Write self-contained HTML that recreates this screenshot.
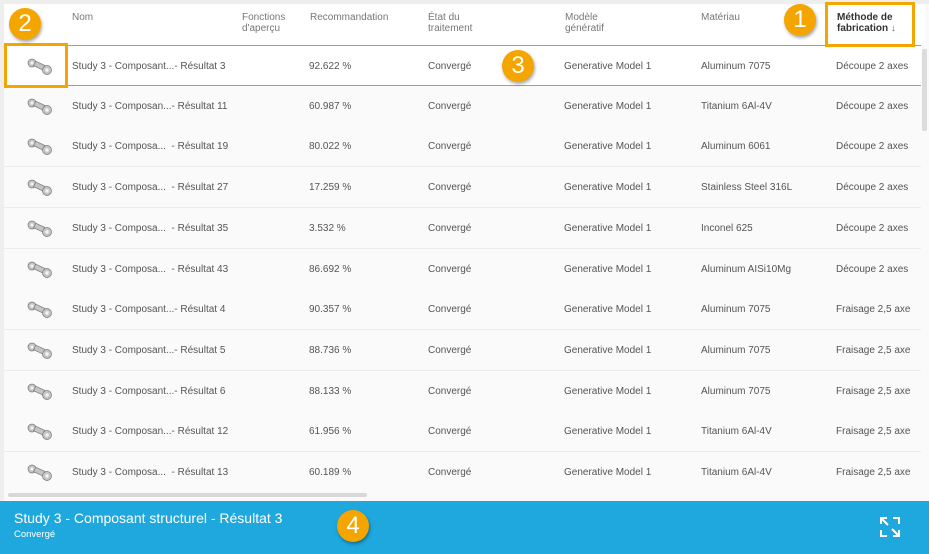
<!DOCTYPE html>
<html><head><meta charset="utf-8"><style>
*{margin:0;padding:0;box-sizing:border-box}
body{width:929px;height:554px;overflow:hidden;background:#eeeeee;font-family:"Liberation Sans",sans-serif;position:relative}
.panel{position:absolute;left:4px;top:4px;width:925px;height:497px;background:#fafafa}
.hdr{position:absolute;left:4px;top:4px;width:921px;height:41px;background:#fff}
.h{position:absolute;font-size:10px;color:#777;line-height:11px}
.row{position:absolute;left:4px;width:917px;height:41px;border-bottom:1px solid #ececec;background:#fafafa}
.c{position:absolute;top:0;line-height:41px;font-size:10px;color:#555;white-space:nowrap}
.thumb{position:absolute;left:22px;top:12px;width:28px;height:17px}
.bar{position:absolute;left:0;top:501px;width:929px;height:53px;background:#1ea8de;color:#fff}
.badge{position:absolute;width:32px;height:32px;border-radius:50%;background:#f5a500;color:#fff;font-size:24px;text-align:center;line-height:32px;box-shadow:1px 2px 3px rgba(0,0,0,.35)}
.box{position:absolute;border:3px solid #f5a500}
</style></head><body>
<div class="panel"></div>
<div class="hdr"></div>
<div class="h" style="left:72px;top:12px">Nom</div>
<div class="h" style="left:242px;top:12px">Fonctions<br>d'aperçu</div>
<div class="h" style="left:310px;top:12px">Recommandation</div>
<div class="h" style="left:428px;top:12px">État du<br>traitement</div>
<div class="h" style="left:565px;top:12px">Modèle<br>génératif</div>
<div class="h" style="left:701px;top:12px">Matériau</div>
<div class="h" style="left:837px;top:12px;color:#333;font-weight:bold">Méthode de<br>fabrication <span style="color:#4a6a90">↓</span></div>

<div id="rows"></div>
<script>
const d=[["Study 3 - Composant...- Résultat 3","92.622 %","Aluminum 7075","Découpe 2 axes"],
["Study 3 - Composan...- Résultat 11","60.987 %","Titanium 6Al-4V","Découpe 2 axes"],
["Study 3 - Composa...  - Résultat 19","80.022 %","Aluminum 6061","Découpe 2 axes"],
["Study 3 - Composa...  - Résultat 27","17.259 %","Stainless Steel 316L","Découpe 2 axes"],
["Study 3 - Composa...  - Résultat 35","3.532 %","Inconel 625","Découpe 2 axes"],
["Study 3 - Composa...  - Résultat 43","86.692 %","Aluminum AISi10Mg","Découpe 2 axes"],
["Study 3 - Composant...- Résultat 4","90.357 %","Aluminum 7075","Fraisage 2,5 axe"],
["Study 3 - Composant...- Résultat 5","88.736 %","Aluminum 7075","Fraisage 2,5 axe"],
["Study 3 - Composant...- Résultat 6","88.133 %","Aluminum 7075","Fraisage 2,5 axe"],
["Study 3 - Composan...- Résultat 12","61.956 %","Titanium 6Al-4V","Fraisage 2,5 axe"],
["Study 3 - Composa...  - Résultat 13","60.189 %","Titanium 6Al-4V","Fraisage 2,5 axe"]];
let h="";
d.forEach((r,i)=>{const t=45+i*40.7;
h+=`<div class="row" style="top:${t}px;${i==0?'background:#fff;border-top:1px solid #5bb3dc;border-bottom:1px solid #5bb3dc;':''}">
<svg class="thumb" viewBox="0 0 28 17"><g fill="#c4c4c4" stroke="#777" stroke-width=".7"><circle cx="6" cy="5" r="4"/><rect x="8" y="5" width="10" height="5" transform="rotate(25 13 8)"/><circle cx="21" cy="12" r="4.5"/></g><circle cx="6" cy="5" r="1.5" fill="#f4f4f4"/><circle cx="21" cy="12" r="1.7" fill="#f4f4f4"/></svg>
<div class="c" style="left:68px">${r[0].replace(/ /g,'&nbsp;')}</div>
<div class="c" style="left:305px">${r[1]}</div>
<div class="c" style="left:424px">Convergé</div>
<div class="c" style="left:560px">Generative Model 1</div>
<div class="c" style="left:697px">${r[2]}</div>
<div class="c" style="left:832px">${r[3]}</div></div>`});
document.getElementById("rows").innerHTML=h;
</script>
<div style="position:absolute;left:4px;top:490px;width:921px;height:11px;background:#fafafa"></div>
<div style="position:absolute;left:8px;top:493px;width:359px;height:4px;border-radius:2px;background:#d8d8d8"></div>
<div style="position:absolute;left:922px;top:49px;width:5px;height:82px;border-radius:2px;background:#dcdcdc"></div>

<div class="bar">
<div style="position:absolute;left:14px;top:9px;font-size:14px">Study 3 - Composant structurel - Résultat 3</div>
<div style="position:absolute;left:14px;top:28px;font-size:9.5px">Convergé</div>
<svg style="position:absolute;left:880px;top:16px" width="20" height="20" viewBox="0 0 20 20" fill="none" stroke="#fff" stroke-width="2"><path d="M1 7V1h6M13 1h6v6M19 13v6h-6M7 19H1v-6M2 2l6 6M18 18l-6-6"/></svg>
</div>

<div class="box" style="left:4px;top:43px;width:64px;height:45px"></div>
<div class="box" style="left:825px;top:2px;width:90px;height:45px"></div>
<div class="badge" style="left:9px;top:8px">2</div>
<div class="badge" style="left:784px;top:4px">1</div>
<div class="badge" style="left:502px;top:50px">3</div>
<div class="badge" style="left:337px;top:510px">4</div>
</body></html>
